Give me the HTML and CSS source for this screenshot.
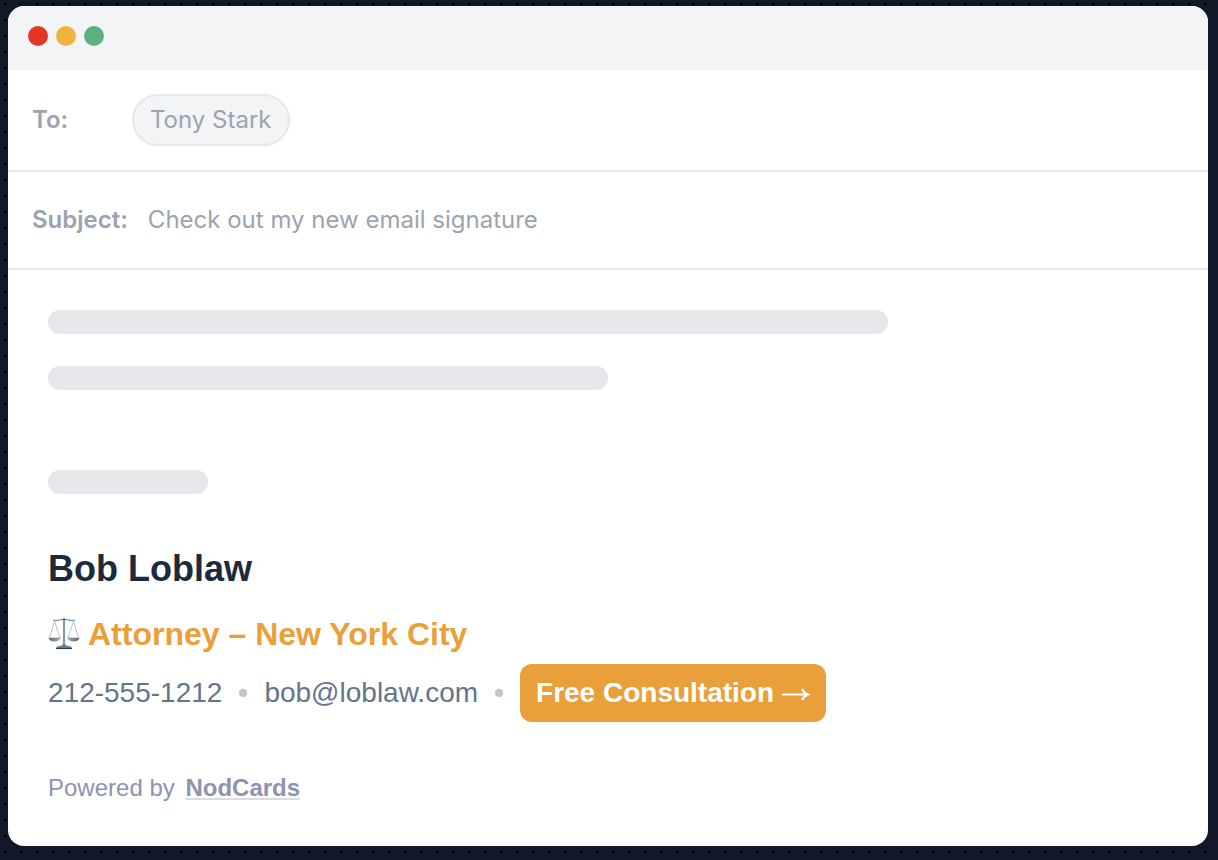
FILE: index.html
```html
<!DOCTYPE html>
<html lang="en">
<head>
    <meta charset="UTF-8">
    <meta name="viewport" content="width=device-width, initial-scale=1.0">
    <title>Email Signature</title>
    <link rel="stylesheet" href="styles.css">
</head>
<body>
    <main class="window">
        <div class="titlebar">
            <span class="light red"></span>
            <span class="light yellow"></span>
            <span class="light green"></span>
        </div>

        <div class="field">
            <span class="label label-to">To:</span>
            <span class="recipient">Tony Stark</span>
        </div>
        <div class="field">
            <span class="label">Subject:</span>
            <span class="subject">Check out my new email signature</span>
        </div>

        <div class="message">
            <div class="line line-long"></div>
            <div class="line line-medium"></div>
            <div class="line line-short"></div>

            <div class="signature">
                <h1 class="name">Bob Loblaw</h1>
                <p class="title">
                    <svg class="scales" viewBox="0 0 32 32" width="32" height="32" fill="none" aria-hidden="true">
                        <defs>
                            <linearGradient id="pan" x1="0" y1="0" x2="1" y2="0">
                                <stop offset="0" stop-color="#4c6072"/>
                                <stop offset=".5" stop-color="#c3cbd0"/>
                                <stop offset="1" stop-color="#50585c"/>
                            </linearGradient>
                        </defs>
                        <path d="M6.500 3L1.500 20M6.500 3L12 20M25.500 3L20 20M25.500 3L30.500 20" stroke="#a9b2b9" stroke-width=".8"/>
                        <path d="M5 2Q8 3 11 2Q16 .8 21 2Q24 3 27 2" stroke="#7088a0" stroke-width="1.200"/>
                        <path d="M16 1V27" stroke="#8396a8" stroke-width="2"/>
                        <circle cx="16" cy="1.500" r="1.200" fill="#5a7289"/>
                        <path d="M.5 20H12.500Q11 23.500 6.500 23.500Q2 23.500 .5 20ZM19.500 20H31.500Q30 23.500 25.500 23.500Q21 23.500 19.500 20Z" fill="url(#pan)"/>
                        <path d="M.5 20H12.500M19.500 20H31.500" stroke="#8d99a2" stroke-width=".8"/>
                        <path d="M15 26H17Q18 28 22 28.300Q24 28.800 24 30.500H8Q8 28.800 10 28.300Q14 28 15 26Z" fill="#6c8195"/>
                        <path d="M8 30.500H24" stroke="#333e4a" stroke-width="1.200"/>
                    </svg>
                    <span>Attorney – New York City</span>
                </p>
                <div class="contact">
                    <span>212-555-1212</span>
                    <span class="dot"></span>
                    <span>bob@loblaw.com</span>
                    <span class="dot"></span>
                    <a class="cta" href="#">
                        Free Consultation
                        <svg viewBox="0 0 28 16" width="28" height="16" fill="none" stroke="currentColor" aria-hidden="true">
                            <path d="M0 9.500H26" stroke-width="2"/>
                            <path d="M20 4Q22 8 26 9.500Q22 11 20 15" stroke-width="2.200"/>
                        </svg>
                    </a>
                </div>
                <p class="powered">Powered by <a href="#">NodCards</a></p>
            </div>
        </div>
    </main>
</body>
</html>
```
FILE: styles.css
```css
* {
    box-sizing: border-box;
}

body {
    margin: 0;
    min-height: 100vh;
    padding: 6px 10px 14px 8px;
    background-color: #111827;
    background-image: radial-gradient(circle, #000 1px, transparent 2px);
    background-size: 16px 16px;
    background-position: -3px -4px;
    font-family: "Liberation Sans", Arial, sans-serif;
}

.window {
    background: #fff;
    border-radius: 16px;
    overflow: hidden;
}

.titlebar {
    display: flex;
    gap: 8px;
    height: 64px;
    padding: 20px;
    background: #f3f4f6;
}

.light {
    width: 20px;
    height: 20px;
    border-radius: 50%;
}

.red {
    background: #e53525;
}

.yellow {
    background: #edb440;
}

.green {
    background: #5cb180;
}

.field {
    display: flex;
    align-items: center;
    padding: 24px;
    border-bottom: 2px solid #e5e7eb;
    font-family: Inter, sans-serif;
    font-size: 24px;
    line-height: 48px;
    color: #9ca3af;
}

.label {
    margin-right: 20px;
    font-weight: 600;
}

.label-to {
    width: 80px;
}

.recipient {
    padding: 0 16px;
    background: #f3f4f6;
    border: 2px solid #e5e7eb;
    border-radius: 26px;
}

.message {
    padding: 40px;
}

.line {
    height: 24px;
    max-width: 100%;
    margin-bottom: 32px;
    background: #e5e7eb;
    border-radius: 12px;
}

.line-long {
    width: 840px;
}

.line-medium {
    width: 560px;
    margin-bottom: 80px;
}

.line-short {
    width: 160px;
    margin-bottom: 48px;
}

.name {
    margin: 0 0 18px;
    font-size: 36px;
    line-height: 54px;
    color: #1e293b;
}

.title {
    display: flex;
    align-items: center;
    gap: 8px;
    margin: 0 0 10px;
    font-size: 32px;
    font-weight: bold;
    line-height: 40px;
    color: #e9a03b;
}

.contact {
    display: flex;
    flex-wrap: wrap;
    align-items: center;
    gap: 17px;
    font-size: 28px;
    line-height: 42px;
    color: #64748b;
}

.dot {
    width: 8px;
    height: 8px;
    border-radius: 50%;
    background: #c1c5d0;
}

.cta {
    display: flex;
    align-items: center;
    gap: 8px;
    padding: 8px 16px;
    background: #e9a03b;
    border-radius: 12px;
    color: #fff;
    font-weight: bold;
    text-decoration: none;
}

.powered {
    margin: 48px 0 0;
    font-size: 24px;
    line-height: 36px;
    color: #8d93b0;
}

.powered a {
    margin-left: 4px;
    color: #8d93b0;
    font-weight: bold;
    text-decoration: underline;
    text-decoration-color: #dcdcdc;
    text-decoration-thickness: 2px;
    text-underline-offset: 2px;
}
```
